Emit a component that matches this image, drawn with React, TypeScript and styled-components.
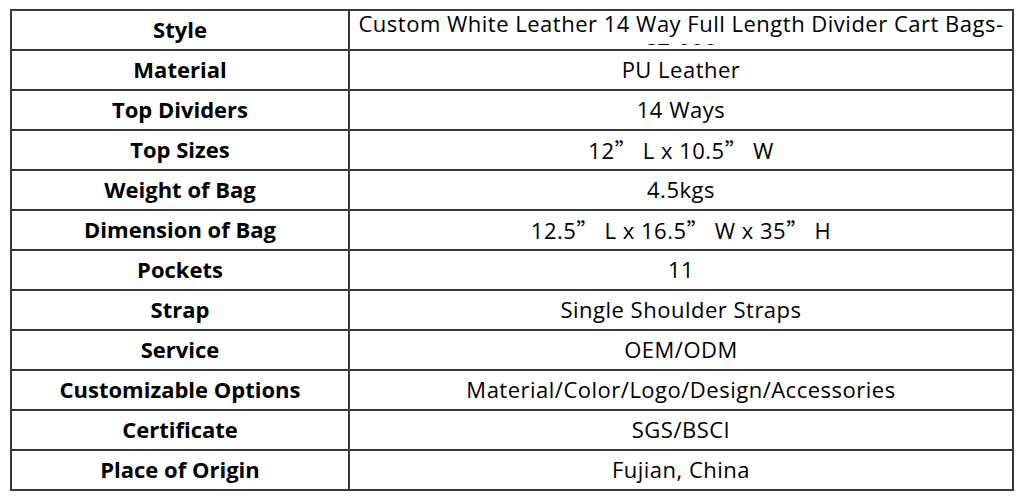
import React from 'react'
import styled, { createGlobalStyle } from 'styled-components'

const GlobalStyle = createGlobalStyle`
  html, body {
    margin: 0;
    padding: 0;
    background: #ffffff;
  }
`

type Spec = { label: string; value: React.ReactNode; clip?: boolean }

const Q = () => <Quote>”</Quote>

const specs: Spec[] = [
  { label: 'Style', value: 'Custom White Leather 14 Way Full Length Divider Cart Bags-\u200BSZ-008', clip: true },
  { label: 'Material', value: 'PU Leather' },
  { label: 'Top Dividers', value: '14 Ways' },
  { label: 'Top Sizes', value: <>12<Q /> L x 10.5<Q /> W</> },
  { label: 'Weight of Bag', value: '4.5kgs' },
  { label: 'Dimension of Bag', value: <>12.5<Q /> L x 16.5<Q /> W x 35<Q /> H</> },
  { label: 'Pockets', value: '11' },
  { label: 'Strap', value: 'Single Shoulder Straps' },
  { label: 'Service', value: 'OEM/ODM' },
  { label: 'Customizable Options', value: 'Material/Color/Logo/Design/Accessories' },
  { label: 'Certificate', value: 'SGS/BSCI' },
  { label: 'Place of Origin', value: 'Fujian, China' },
]

const App = () => {
  return (
    <Page>
      <GlobalStyle />
      <SpecTable>
        <tbody>
          {specs.map((s) => (
            <Row key={s.label}>
              <LabelCell>{s.label}</LabelCell>
              <ValueCell $clip={s.clip}>
                <ValueText $clip={s.clip}>{s.value}</ValueText>
              </ValueCell>
            </Row>
          ))}
        </tbody>
      </SpecTable>
    </Page>
  )
}

export default App

const Page = styled.div`
  padding: 9px 10px 0 10px;
  font-family: 'Open Sans', 'Noto Sans CJK SC', sans-serif;
  color: #000;
`

const SpecTable = styled.table`
  width: 1004px;
  border-collapse: collapse;
  table-layout: fixed;
`

const Row = styled.tr`
  height: 40px;
`

const LabelCell = styled.td`
  width: 336px;
  height: 36px;
  padding: 0 0 2px 0;
  border: 2px solid #3a3a3a;
  text-align: center;
  vertical-align: middle;
  font-size: 22px;
  font-weight: 700;
  line-height: 28px;
`

const ValueCell = styled.td<{ $clip?: boolean }>`
  height: ${(p) => (p.$clip ? '38px' : '36px')};
  padding: ${(p) => (p.$clip ? '0 8px' : '0 8px 2px 8px')};
  border: 2px solid #3a3a3a;
  text-align: center;
  vertical-align: ${(p) => (p.$clip ? 'top' : 'middle')};
  font-size: 22px;
  font-weight: 400;
  letter-spacing: 0.5px;
  line-height: 28px;
`

const ValueText = styled.div<{ $clip?: boolean }>`
  max-height: ${(p) => (p.$clip ? '36px' : '38px')};
  overflow: hidden;
  margin-top: ${(p) => (p.$clip ? '-2px' : '0')};
`

const Quote = styled.span`
  font-family: 'Noto Sans CJK SC', sans-serif;
  letter-spacing: 0;
`
